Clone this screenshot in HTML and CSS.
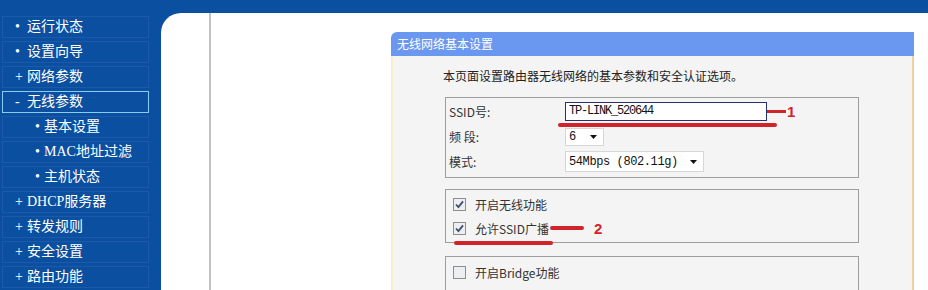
FILE: index.html
```html
<!DOCTYPE html>
<html lang="zh-CN">

<head>
  <meta charset="UTF-8">
  <title>无线网络基本设置</title>
  <link rel="stylesheet" href="styles.css">
</head>

<body>
  <div class="frame">
    <ul class="menu">
      <li><span class="mark">•</span>运行状态</li>
      <li><span class="mark">•</span>设置向导</li>
      <li><span class="mark">+</span>网络参数</li>
      <li class="open"><span class="mark">-</span>无线参数</li>
      <li class="sub"><span class="mark">•</span>基本设置</li>
      <li class="sub"><span class="mark">•</span>MAC地址过滤</li>
      <li class="sub"><span class="mark">•</span>主机状态</li>
      <li><span class="mark">+</span>DHCP服务器</li>
      <li><span class="mark">+</span>转发规则</li>
      <li><span class="mark">+</span>安全设置</li>
      <li><span class="mark">+</span>路由功能</li>
    </ul>

    <div class="main">
      <div class="gutter"></div>
      <div class="content">
        <div class="panel">
          <div class="panel-title">无线网络基本设置</div>
          <div class="panel-body">
            <p class="intro">本页面设置路由器无线网络的基本参数和安全认证选项。</p>

            <div class="group fields">
              <div class="row">
                <span class="label">SSID号:</span>
                <div class="field">
                  <span class="input">TP-LINK_520644</span>
                  <span class="pointer"></span>
                  <span class="num">1</span>
                  <span class="underline u1"></span>
                </div>
              </div>
              <div class="row">
                <span class="label">频 段:</span>
                <div class="field">
                  <span class="select band">6
                    <svg class="arrow" viewBox="0 0 7 4"><path d="M0 0h7L3.5 4z" /></svg>
                  </span>
                </div>
              </div>
              <div class="row">
                <span class="label">模式:</span>
                <div class="field">
                  <span class="select mode">54Mbps (802.11g)
                    <svg class="arrow" viewBox="0 0 7 4"><path d="M0 0h7L3.5 4z" /></svg>
                  </span>
                </div>
              </div>
            </div>

            <div class="group checks">
              <div class="check-row">
                <svg class="box" viewBox="0 0 13 13">
                  <rect x="0.5" y="0.5" width="12" height="12" fill="#eceef0" stroke="#8d8d8d" />
                  <path d="M3 6.5l2.4 2.6L10 3.4" fill="none" stroke="#3d4f6e" stroke-width="1.8" />
                </svg>
                开启无线功能
              </div>
              <div class="check-row">
                <svg class="box" viewBox="0 0 13 13">
                  <rect x="0.5" y="0.5" width="12" height="12" fill="#eceef0" stroke="#8d8d8d" />
                  <path d="M3 6.5l2.4 2.6L10 3.4" fill="none" stroke="#3d4f6e" stroke-width="1.8" />
                </svg>
                允许SSID广播
                <span class="pointer wide"></span>
                <span class="num far">2</span>
                <span class="underline u2"></span>
              </div>
            </div>

            <div class="group checks last">
              <div class="check-row">
                <svg class="box" viewBox="0 0 13 13">
                  <rect x="0.5" y="0.5" width="12" height="12" fill="#eceef0" stroke="#8d8d8d" />
                </svg>
                开启Bridge功能
              </div>
              <div class="check-row"></div>
            </div>
          </div>
        </div>
      </div>
    </div>
  </div>
</body>

</html>
```

FILE: styles.css
```css
html,
body {
  margin: 0;
  height: 100%;
  overflow: hidden;
}

body {
  box-sizing: border-box;
  padding-top: 13px;
  background-color: #0b4fa0;
  font-family: "Noto Sans CJK SC", sans-serif;
}

.frame {
  display: flex;
  height: 100%;
}

/* left menu */
.menu {
  list-style: none;
  margin: 0;
  padding: 3px 0 0 2px;
  width: 159px;
  flex: none;
}

.menu li {
  box-sizing: border-box;
  display: flex;
  align-items: center;
  width: 147px;
  height: 22px;
  margin-bottom: 3px;
  padding-left: 12px;
  border: 1px solid #1c5aa9;
  color: white;
  font: 14px/20px "Liberation Serif", "Noto Sans CJK SC", serif;
}

.menu .mark {
  width: 12px;
}

.menu li.sub {
  padding-left: 32px;
}

.menu li.sub .mark {
  width: 9px;
}

.menu li.open {
  border-color: #86cff3;
}

/* main area */
.main {
  flex: 1;
  display: flex;
  background: white;
  border-top-left-radius: 20px;
}

.gutter {
  width: 48px;
  flex: none;
  border-right: 2px solid #c2c2c2;
}

.content {
  flex: 1;
  padding: 19px 14px 0 180px;
}

.panel-title {
  height: 24px;
  padding-left: 6px;
  background: #6a98f0;
  border-top-left-radius: 6px;
  color: white;
  font-size: 12px;
  line-height: 24px;
}

.panel-body {
  height: 300px;
  padding: 12px 0 0 50px;
  background: #f4f4f4;
  border-left: 2px solid #fbebcf;
  border-right: 2px solid #efcfa6;
}

.intro {
  margin: 0;
  font-size: 12px;
  line-height: 16px;
  color: #222;
}

.group {
  box-sizing: border-box;
  width: 414px;
  margin: 13px 0 0 2px;
  border: 1px solid #9d9d9d;
}

.fields {
  padding: 1px 0 3px 3px;
}

.row {
  display: grid;
  grid-template-columns: 116px auto;
  align-items: center;
  height: 25px;
}

.label {
  font-size: 12px;
  color: #333;
}

.field {
  position: relative;
  display: flex;
  align-items: center;
}

.input {
  box-sizing: border-box;
  width: 202px;
  height: 19px;
  padding-left: 3px;
  background: white;
  border: 1px solid #26336a;
  color: #111;
  font: 12px/17px "Liberation Mono", monospace;
  letter-spacing: -1.2px;
}

.select {
  box-sizing: border-box;
  display: flex;
  align-items: center;
  justify-content: space-between;
  height: 19px;
  padding: 0 6px 0 3px;
  background: white;
  border: 1px solid #d6d6d6;
  color: #111;
  font: 12px "Liberation Mono", monospace;
  letter-spacing: -0.4px;
}

.select.band {
  width: 39px;
  height: 18px;
}

.select.mode {
  width: 139px;
  height: 21px;
}

.arrow {
  width: 7px;
  height: 4px;
  fill: #111;
}

/* red marks */
.pointer {
  width: 19px;
  height: 3px;
  background: #d0232a;
}

.pointer.wide {
  width: 34px;
  height: 4px;
  margin-left: 1px;
  border-radius: 2px;
}

.num {
  margin-left: 1px;
  color: #d0232a;
  font: bold 15px/1 "Liberation Sans", sans-serif;
}

.num.far {
  margin-left: 10px;
}

.underline {
  position: absolute;
  height: 4px;
  background: #d0232a;
  border-radius: 2px;
}

.u1 {
  left: -7px;
  top: 21px;
  width: 219px;
}

.u2 {
  left: 1px;
  top: 25px;
  width: 99px;
}

/* check boxes */
.checks {
  margin-top: 11px;
  padding: 2px 0 2px 7px;
}

.checks.last {
  margin-top: 13px;
  padding-top: 3px;
}

.check-row {
  position: relative;
  display: flex;
  align-items: center;
  height: 24px;
  color: #333;
  font-size: 12px;
}

.box {
  width: 13px;
  height: 13px;
  margin-right: 9px;
}
```
